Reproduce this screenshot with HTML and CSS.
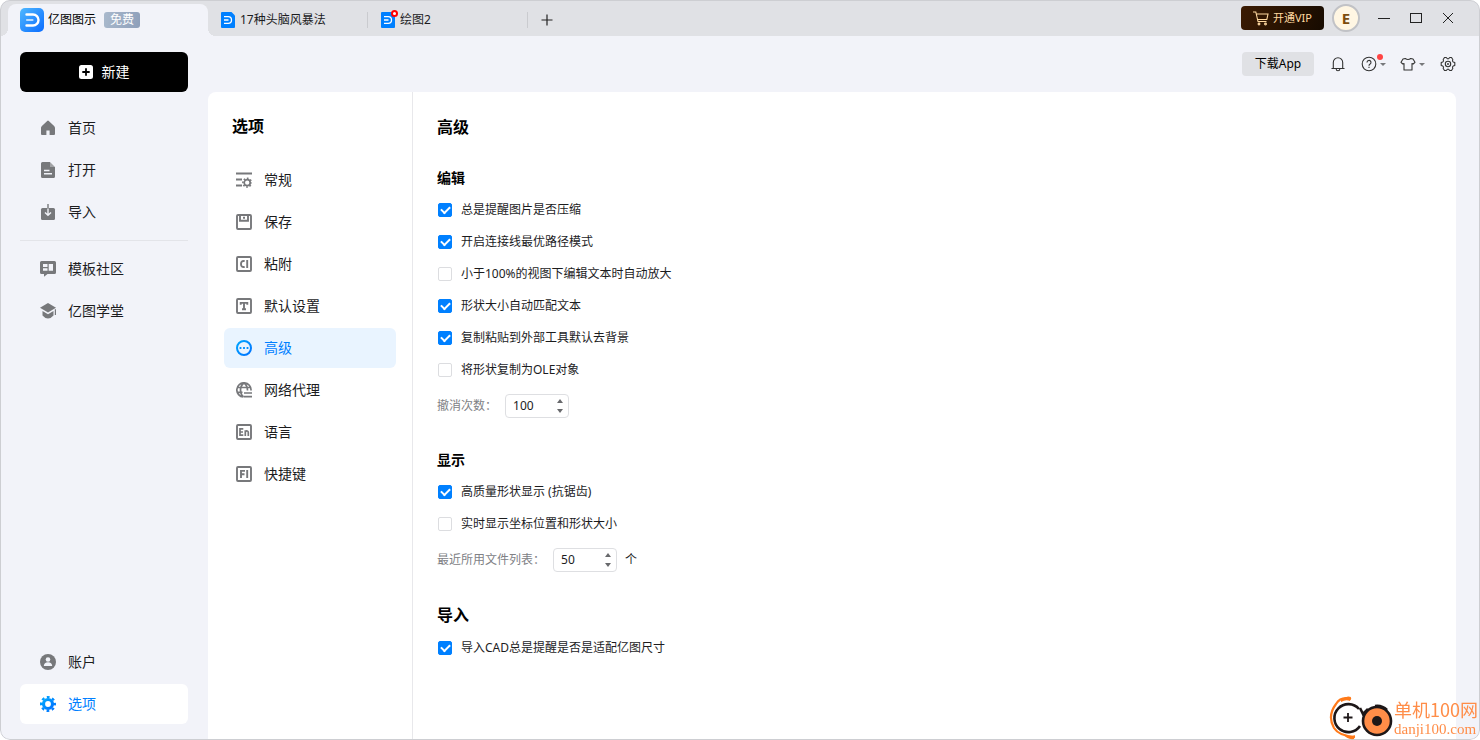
FILE: index.html
```html
<!DOCTYPE html>
<html lang="zh-CN">
<head>
<meta charset="utf-8">
<title>亿图图示</title>
<link rel="stylesheet" href="styles.css">
</head>
<body>
<svg class="defs" aria-hidden="true">
  <defs>
    <linearGradient id="brand" x1="0" y1="0" x2="1" y2="1"><stop offset="0" stop-color="#4fb8ff"/><stop offset="1" stop-color="#0a6cff"/></linearGradient>
    <linearGradient id="accent" x1="0" y1="0" x2="1" y2="1"><stop offset="0" stop-color="#00a6ff"/><stop offset="1" stop-color="#0072ff"/></linearGradient>
    <symbol id="doc" viewBox="0 0 14 16">
      <path fill="#0080ff" d="M1 0h9.500L14 3.500V15a1 1 0 0 1-1 1H1a1 1 0 0 1-1-1V1a1 1 0 0 1 1-1z"/>
      <path fill="none" stroke="#fff" stroke-width="1.300" d="M3 4.700h4.200a3.300 3.300 0 0 1 0 6.600H3M3 8h4.500"/>
    </symbol>
  </defs>
</svg>
<div class="window">
  <header class="titlebar">
    <div class="tab-home">
      <svg width="24" height="24" viewBox="0 0 24 24"><rect width="24" height="24" rx="5" fill="url(#brand)"/><path d="M6.500 6.500H13a5.500 5.500 0 0 1 0 11H6.500" fill="none" stroke="#fff" stroke-width="2.400" stroke-linecap="round"/><path d="M7 12h5.500" stroke="#b9dcff" stroke-width="2.200" stroke-linecap="round"/></svg>
      <span>亿图图示</span>
      <span class="free">免费</span>
    </div>
    <div class="tab"><svg width="14" height="16"><use href="#doc"/></svg><span>17种头脑风暴法</span></div>
    <div class="tab"><span class="tab-icon"><svg width="14" height="16"><use href="#doc"/></svg><i class="unsaved"></i></span><span>绘图2</span></div>
    <button class="add" aria-label="新建标签"><svg width="12" height="12" viewBox="0 0 12 12"><path d="M6 .500v11M.500 6h11" stroke="#222" stroke-width="1.200"/></svg></button>
    <div class="win-tools">
      <button class="vip"><svg width="16" height="15" viewBox="0 0 16 15" fill="none" stroke="#ffd9a0" stroke-width="1.100"><path d="M0 1h2.800l2.200 9.500h8.500M3.500 3h11.500l-1.200 5.500H4.700"/><circle cx="6" cy="13" r=".900"/><circle cx="12.500" cy="13" r=".900"/></svg>开通VIP</button>
      <button class="avatar">E</button>
      <button class="win-btn" aria-label="最小化"><svg width="12" height="12" viewBox="0 0 12 12"><path d="M0 6.500h12" stroke="#222"/></svg></button>
      <button class="win-btn" aria-label="最大化"><svg width="12" height="12" viewBox="0 0 12 12"><rect x=".500" y="1.500" width="11" height="9" fill="none" stroke="#222"/></svg></button>
      <button class="win-btn" aria-label="关闭"><svg width="12" height="12" viewBox="0 0 12 12"><path d="M1 1l10 10M11 1L1 11" stroke="#222"/></svg></button>
    </div>
  </header>

  <div class="body">
    <aside class="sidebar">
      <button class="new"><svg width="14" height="14" viewBox="0 0 14 14"><rect width="14" height="14" rx="2.500" fill="#fff"/><path d="M7 3.300v7.400M3.300 7h7.400" stroke="#000" stroke-width="1.800"/></svg>新建</button>
      <nav class="side-nav">
        <a class="item" href="#"><svg width="16" height="16" viewBox="0 0 16 16"><path fill="#77787b" d="M7.200.900a1.200 1.200 0 0 1 1.600 0l5.300 5q.900.900.900 2V14a1 1 0 0 1-1 1H9.600v-4.500H6.400V15H2a1 1 0 0 1-1-1V7.900q0-1.100.900-2z"/></svg>首页</a>
        <a class="item" href="#"><svg width="16" height="16" viewBox="0 0 16 16"><path fill="#77787b" d="M2.500 0H10v5h5v9.500a1.500 1.500 0 0 1-1.500 1.500h-11A1.500 1.500 0 0 1 1 14.500v-13A1.500 1.500 0 0 1 2.500 0z"/><path fill="#a2a3a6" d="M10 0l5 5h-5z"/><path d="M4 8.500h5.500M4 11.700h8" stroke="#f2f3f9" stroke-width="1.400"/></svg>打开</a>
        <a class="item" href="#"><svg width="16" height="16" viewBox="0 0 16 16"><rect x="1" y="4" width="14" height="12" rx="1.500" fill="#77787b"/><path d="M8 0v4.500" stroke="#77787b" stroke-width="1.400"/><path d="M8 4.500V11M5 8.500l3 2.800 3-2.800" fill="none" stroke="#f2f3f9" stroke-width="1.400"/></svg>导入</a>
        <hr>
        <a class="item" href="#"><svg width="16" height="16" viewBox="0 0 16 16"><path fill="#77787b" d="M1.500 0h13A1.500 1.500 0 0 1 16 1.500v10a1.500 1.500 0 0 1-1.500 1.500H7.500L4 15.800V13H1.500A1.500 1.500 0 0 1 0 11.500v-10A1.500 1.500 0 0 1 1.500 0z"/><path fill="#f2f3f9" d="M3 3h4.500v3H3zM3 7.200h4.500v2.600H3zM8.700 3H13v6.800H8.700z"/></svg>模板社区</a>
        <a class="item" href="#"><svg width="16" height="16" viewBox="0 0 16 16" fill="#77787b"><path d="M8 0l8 4.700-8 4.800L0 4.700z"/><path d="M2.500 8L8 11.200 13.500 8v4.500Q11 15.500 8 15.500T2.500 12.500z"/><path d="M14.800 6.200h1.200V12h-1.200z"/></svg>亿图学堂</a>
      </nav>
      <nav class="side-nav bottom">
        <a class="item" href="#"><svg width="16" height="16" viewBox="0 0 16 16"><circle cx="8" cy="8" r="8" fill="#77787b"/><circle cx="8" cy="5.500" r="2.300" fill="#f2f3f9"/><path fill="#f2f3f9" d="M3.800 12q.200-3.500 4.200-3.700 4 .200 4.200 3.700z"/></svg>账户</a>
        <a class="item active" href="#"><svg width="16" height="16" viewBox="0 0 16 16"><g fill="none" stroke="url(#accent)"><circle cx="8" cy="8" r="4.500" stroke-width="3.200"/><circle cx="8" cy="8" r="6.900" stroke-width="2.200" stroke-dasharray="2.800 2.619" stroke-dashoffset="1.400"/></g></svg>选项</a>
      </nav>
    </aside>

    <main class="main">
      <div class="toolbar">
        <button class="download">下载App</button>
        <button class="tool bell" aria-label="通知"><svg width="14" height="16" viewBox="0 0 14 16" fill="none" stroke="#333" stroke-width="1.100"><path d="M.500 12.500h13M2.300 12.500V6.500a4.700 4.700 0 0 1 9.400 0v6M5.200 13a1.800 1.800 0 0 0 3.600 0"/></svg></button>
        <button class="tool help" aria-label="帮助"><svg width="16" height="16" viewBox="0 0 16 16" fill="none" stroke="#333" stroke-width="1.100"><circle cx="8" cy="8" r="6.800"/><path d="M6 6.500a2 2 0 1 1 2.900 1.700Q8 8.700 8 9.700M8 10.800v1.200"/></svg><i class="caret"></i><i class="dot"></i></button>
        <button class="tool" aria-label="皮肤"><svg width="16" height="16" viewBox="0 0 16 16" fill="none" stroke="#333" stroke-width="1.100" stroke-linejoin="round"><path d="M5.300 2.500q2.700 2 5.400 0l2.300.500 2 3.300-1.800 1.700-1.200-.500v6.500H4V7.500L2.800 8 1 6.300 3 3z"/></svg><i class="caret"></i></button>
        <button class="tool gear" aria-label="设置"><svg width="16" height="16" viewBox="0 0 16 16" fill="none" stroke="#333" stroke-width="1.100" stroke-linejoin="round"><path d="M4.500 1.500h1.800L7.500 2.800h1l1.200-1.300h1.800l1.300 2-.3 1.500.7 1 1.600.6v2.800l-1.600.6-.7 1 .3 1.500-1.300 2H9.700l-1.200-1.300h-1l-1.200 1.300H4.500l-1.300-2 .3-1.500-.7-1-1.600-.6V6.600L2.800 6l.7-1-.3-1.500z"/><circle cx="8" cy="8" r="2.700"/><circle cx="8" cy="8" r=".400"/></svg></button>
      </div>
      <div class="panel">
        <nav class="options">
          <h2>选项</h2>
          <a class="item" href="#"><svg width="16" height="16" viewBox="0 0 16 16" fill="none" stroke="#77787b"><path d="M0 1.500h16M0 7.500h6M0 13.500h6" stroke-width="2"/><circle cx="11.200" cy="10.700" r="3" stroke-width="1.700"/><circle cx="11.200" cy="10.700" r="4.300" stroke-width="1.600" stroke-dasharray="1.700 1.677" stroke-dashoffset=".850"/></svg>常规</a>
          <a class="item" href="#"><svg width="16" height="16" viewBox="0 0 16 16" fill="none" stroke="#77787b" stroke-width="1.900"><rect x="1" y="1" width="14" height="14" rx="1"/><path d="M4 1v5.800h8V1M7 3.800h2"/></svg>保存</a>
          <a class="item" href="#"><svg width="16" height="16" viewBox="0 0 16 16" fill="none" stroke="#77787b" stroke-width="1.900"><rect x="1" y="1" width="14" height="14" rx="1"/><path d="M8.700 5.200Q5 4.200 5 8t3.700 2.800M11.200 4v8"/></svg>粘附</a>
          <a class="item" href="#"><svg width="16" height="16" viewBox="0 0 16 16" fill="none" stroke="#77787b" stroke-width="1.900"><rect x="1" y="1" width="14" height="14" rx="1"/><path d="M4.700 6.700V4.900h6.600v1.800M8 5v6.300M6 11.300h4"/></svg>默认设置</a>
          <a class="item active" href="#"><svg width="16" height="16" viewBox="0 0 16 16"><circle cx="8" cy="8" r="7" fill="none" stroke="url(#accent)" stroke-width="2"/><path fill="#0090ff" d="M3.600 7.100h1.800v1.800H3.600zM7.100 7.100h1.800v1.800H7.100zM10.600 7.100h1.800v1.800h-1.800z"/></svg>高级</a>
          <a class="item" href="#"><svg width="16" height="16" viewBox="0 0 16 16" fill="none" stroke="#77787b" stroke-width="1.700"><path d="M7.500 15A7.100 7.100 0 1 1 15 8.500M1 5.500h14M1 10.300h5.500M8 1Q4.500 3.500 4.500 8t3 7M8 1q3.500 2.500 3.500 7.500M8 11h8M8 14.700h8"/></svg>网络代理</a>
          <a class="item" href="#"><svg width="16" height="16" viewBox="0 0 16 16" fill="none" stroke="#77787b" stroke-width="1.900"><rect x="1" y="1" width="14" height="14" rx="1"/><path d="M7.300 4.800H4v6.400h3.300M4 8h3M9.300 12V6.300M9.300 8q.700-1.200 2-1 1 .200 1 1.500V12" stroke-width="1.700"/></svg>语言</a>
          <a class="item" href="#"><svg width="16" height="16" viewBox="0 0 16 16" fill="none" stroke="#77787b" stroke-width="1.900"><rect x="1" y="1" width="14" height="14" rx="1"/><path d="M5 12V4.900h4M5 8.200h3.500M11.200 4v8"/></svg>快捷键</a>
        </nav>
        <form class="settings">
          <h2>高级</h2>
          <section class="edit">
            <h3>编辑</h3>
            <label class="check"><input type="checkbox" checked>总是提醒图片是否压缩</label>
            <label class="check"><input type="checkbox" checked>开启连接线最优路径模式</label>
            <label class="check"><input type="checkbox">小于100%的视图下编辑文本时自动放大</label>
            <label class="check"><input type="checkbox" checked>形状大小自动匹配文本</label>
            <label class="check"><input type="checkbox" checked>复制粘贴到外部工具默认去背景</label>
            <label class="check"><input type="checkbox">将形状复制为OLE对象</label>
            <div class="number"><label for="undo">撤消次数：</label><span class="spin"><input id="undo" type="number" value="100"><span class="arrows"><button type="button" class="up" aria-label="增加"></button><button type="button" class="down" aria-label="减少"></button></span></span></div>
          </section>
          <section class="display">
            <h3>显示</h3>
            <label class="check"><input type="checkbox" checked>高质量形状显示 (抗锯齿)</label>
            <label class="check"><input type="checkbox">实时显示坐标位置和形状大小</label>
            <div class="number"><label for="recent">最近所用文件列表：</label><span class="spin"><input id="recent" type="number" value="50"><span class="arrows"><button type="button" class="up" aria-label="增加"></button><button type="button" class="down" aria-label="减少"></button></span></span><span class="unit">个</span></div>
          </section>
          <section class="import">
            <h2>导入</h2>
            <label class="check"><input type="checkbox" checked>导入CAD总是提醒是否是适配亿图尺寸</label>
          </section>
        </form>
      </div>
    </main>
  </div>
</div>
<div class="watermark">
  <svg width="64" height="44" viewBox="0 0 64 44" fill="none"><path d="M22 3Q12 0 7 8-2 20 5 32q5 8 21 9" stroke="#ff7a1a" stroke-width="2.200"/><path d="M12 4q5-5 10-3l-1 4q-4-2-9 1zM14 38q6 4 12 1l-1 4q-7 1-11-5z" fill="#ff7a1a"/><path d="M30 13a14 14 0 1 0 1 17" stroke="#1d1718" stroke-width="2.600"/><path d="M19 17v9M14.500 21.500h9" stroke="#1d1718" stroke-width="1.800"/><circle cx="48" cy="25" r="14" fill="#ff8d48" stroke="#1d1718" stroke-width="2.600"/><circle cx="48" cy="25" r="5" fill="#1d1718"/><path d="M31 12l3 6 5-5M46 10q7-1 12 4" stroke="#1d1718" stroke-width="2.600"/></svg>
  <div class="mark-text"><strong>单机100网</strong><span>danji100.com</span></div>
</div>
</body>
</html>
```
FILE: styles.css
```css
*, *::before, *::after { box-sizing: border-box; }
body {
  margin: 0;
  background: #fff;
  color: #1c1c1e;
  font: 12px/16px "Noto Sans", "Noto Sans CJK SC", sans-serif;
}
button { border: 0; padding: 0; background: none; font: inherit; color: inherit; display: flex; align-items: center; justify-content: center; }
a { color: inherit; text-decoration: none; }
svg { flex: none; display: block; }
h2, h3 { margin: 0; color: #000; font-weight: 700; }
h2 { font-size: 16px; line-height: 24px; }
h3 { font-size: 14px; line-height: 20px; }
.defs { position: absolute; width: 0; height: 0; }

.window {
  position: relative;
  min-height: 100vh;
  display: flex;
  flex-direction: column;
  background: #f2f3f9;
  border-radius: 10px;
  overflow: hidden;
}
.window::after {
  content: "";
  position: absolute;
  inset: 0;
  border: 1px solid #cdced2;
  border-radius: 10px;
  pointer-events: none;
}

.titlebar { display: flex; height: 36px; padding-left: 8px; background: #e0e1e5; }
.tab-home {
  position: relative;
  width: 200px;
  margin-top: 4px;
  padding-left: 12px;
  display: flex;
  align-items: center;
  gap: 4px;
  background: #f2f3f9;
  border-radius: 8px 8px 0 0;
  color: #000;
}
.tab-home::before, .tab-home::after { content: ""; position: absolute; bottom: 0; width: 8px; height: 8px; }
.tab-home::before { left: -8px; background: radial-gradient(circle at 0 0, #e0e1e5 8px, #f2f3f9 8px); }
.tab-home::after { right: -8px; background: radial-gradient(circle at 100% 0, #e0e1e5 8px, #f2f3f9 8px); }
.free { width: 36px; margin-left: 4px; border-radius: 3px; background: linear-gradient(100deg, #a9b9cc, #8e9fba); color: #fff; text-align: center; }
.tab { width: 160px; padding: 4px 0 0 13px; display: flex; align-items: center; gap: 5px; position: relative; }
.tab::after { content: ""; position: absolute; right: 0; top: 12px; height: 16px; border-right: 1px solid #cacbcf; }
.tab-icon { position: relative; }
.unsaved { position: absolute; right: -3px; top: -2px; width: 7px; height: 7px; border: 2px solid #f00; border-radius: 50%; background: #fff; }
.add { width: 38px; padding-top: 4px; }
.win-tools { margin-left: auto; padding-right: 16px; display: flex; align-items: center; }
.vip { width: 83px; height: 24px; gap: 4px; margin-right: 8px; border-radius: 4px; background: linear-gradient(110deg, #3b1b02, #170b01); color: #ffd9a0; font-size: 11px; }
.avatar { width: 28px; height: 28px; margin-right: 8px; border: 2px solid #c1c2c6; border-radius: 50%; background: #fff6e3; color: #7c4c0c; font-size: 15px; font-weight: 700; }
.win-btn { width: 32px; height: 32px; }

.body { flex: 1; display: flex; }
.sidebar { width: 208px; padding: 16px 20px; display: flex; flex-direction: column; font-size: 14px; }
.new { height: 40px; gap: 9px; border-radius: 6px; background: #000; color: #fff; }
.side-nav { margin-top: 16px; display: flex; flex-direction: column; gap: 2px; }
.side-nav.bottom { margin-top: auto; }
.item { height: 40px; display: flex; align-items: center; gap: 12px; border-radius: 6px; line-height: 20px; }
.side-nav .item { padding-left: 20px; }
.side-nav .active { background: #fff; color: #0080ff; }
.side-nav hr { width: 100%; height: 1px; margin: 6px 0; border: 0; background: #e3e4e9; }

.main { flex: 1; min-width: 0; display: flex; flex-direction: column; padding-right: 24px; }
.toolbar { height: 56px; display: flex; align-items: center; justify-content: flex-end; }
.download { width: 72px; height: 24px; border-radius: 4px; background: #e0e1e5; color: #000; }
.tool { position: relative; gap: 3px; }
.bell { margin: 0 16px 0 17px; }
.help { margin-right: 14px; }
.gear { margin-left: 15px; }
.caret { border: 3px solid transparent; border-top-color: #77787b; border-bottom: 0; }
.dot { position: absolute; right: 3px; top: -2px; width: 6px; height: 6px; border-radius: 50%; background: #ff4444; }

.panel { flex: 1; display: flex; background: #fff; border-radius: 8px 8px 0 0; }
.options { width: 205px; padding: 22px 16px 0; border-right: 1px solid #e8e8eb; display: flex; flex-direction: column; gap: 2px; font-size: 14px; }
.options h2 { margin: 0 0 20px 8px; }
.options .item { padding-left: 12px; }
.options .active { background: #e9f4ff; color: #0080ff; }

.settings { flex: 1; padding: 23px 24px; }
.edit { margin-top: 29px; }
.display { margin-top: 32px; }
.import { margin-top: 31px; }
.edit h3, .display h3 { margin-bottom: 6px; }
.import h2 { margin-bottom: 5px; }
.check { width: fit-content; height: 32px; padding-left: 1px; display: flex; align-items: center; gap: 9px; }
.check input { position: relative; appearance: none; width: 14px; height: 14px; margin: 0; border: 1px solid #dcdde0; border-radius: 2px; background: #fff; }
.check input:checked { border-color: #0080ff; background: #0080ff; }
.check input:checked::after { content: ""; position: absolute; left: 2px; top: 2px; width: 9px; height: 6px; border: solid #fff; border-width: 0 0 2px 2px; transform: rotate(-45deg); }
.number { height: 24px; margin-top: 8px; display: flex; align-items: center; }
.number label { color: #808185; }
.spin { width: 64px; height: 24px; margin-left: 8px; padding-right: 5px; display: flex; border: 1px solid #dedfe2; border-radius: 4px; background: #fff; }
.spin input { flex: 1; min-width: 0; padding: 0 0 0 7px; border: 0; outline: 0; background: none; color: inherit; font: inherit; appearance: textfield; }
.spin input::-webkit-inner-spin-button { appearance: none; }
.arrows { display: flex; flex-direction: column; justify-content: space-between; padding: 4px 0; }
.up, .down { border: 3px solid transparent; }
.up { border-top: 0; border-bottom: 4px solid #68696c; }
.down { border-bottom: 0; border-top: 4px solid #68696c; }
.unit { margin-left: 8px; color: #1c1c1e; }

.watermark { position: fixed; right: 2px; bottom: 0; display: flex; align-items: center; gap: 1px; color: #ff8d48; }
.mark-text { display: flex; flex-direction: column; }
.mark-text strong { font: 400 18px/22px "Noto Sans CJK SC", sans-serif; }
.mark-text span { font: 15px/18px "Liberation Serif", serif; }
```
